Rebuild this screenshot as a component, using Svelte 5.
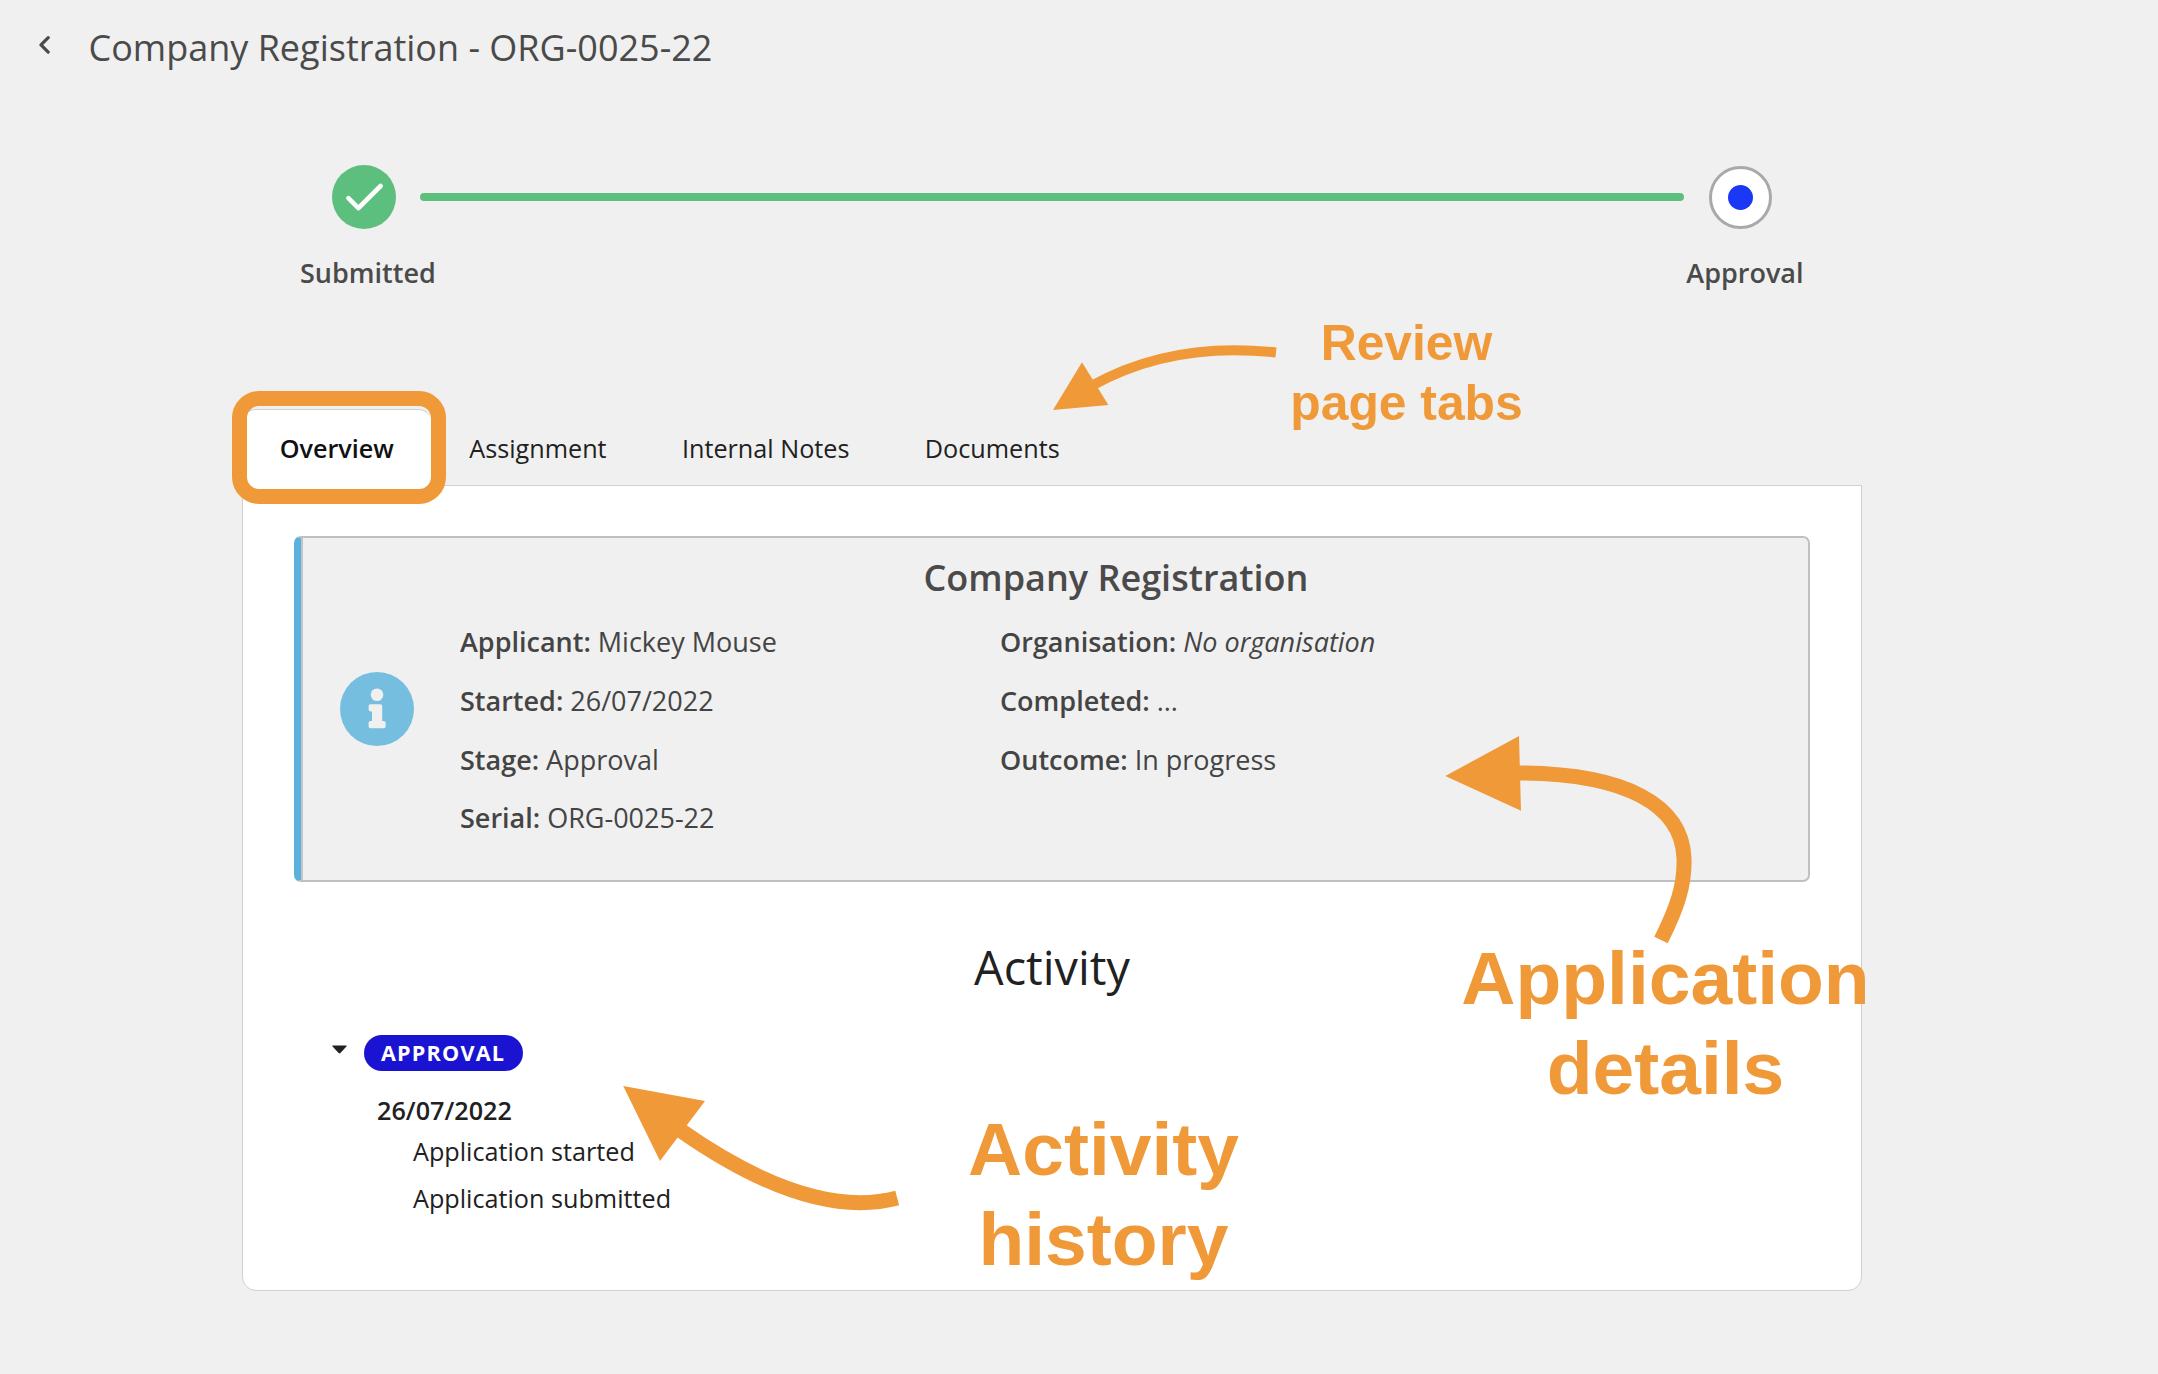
<script>
  const tabs = ['Overview', 'Assignment', 'Internal Notes', 'Documents'];
  let active = $state('Overview');

  const left = [
    { label: 'Applicant:', value: 'Mickey Mouse' },
    { label: 'Started:', value: '26/07/2022' },
    { label: 'Stage:', value: 'Approval' },
    { label: 'Serial:', value: 'ORG-0025-22' }
  ];
  const right = [
    { label: 'Organisation:', value: 'No organisation', muted: true },
    { label: 'Completed:', value: '...' },
    { label: 'Outcome:', value: 'In progress' }
  ];
  const events = ['Application started', 'Application submitted'];
</script>

{#snippet details(rows)}
  <dl class="details">
    {#each rows as row}
      <div class="detail">
        <dt>{row.label}</dt>
        <dd class:muted={row.muted}>{row.value}</dd>
      </div>
    {/each}
  </dl>
{/snippet}

<div class="page">
  <header class="header">
    <svg class="back" viewBox="0 0 12 18" aria-hidden="true">
      <path d="M10.2 1.7 3 8.9l7.2 7.2" />
    </svg>
    <h1>Company Registration - ORG-0025-22</h1>
  </header>

  <section class="stepper">
    <div class="track">
      <svg class="done" viewBox="0 0 64 64" aria-hidden="true">
        <circle cx="32" cy="32" r="32" />
        <path d="M16.4 33.2 26.4 43.2 48.6 21" />
      </svg>
      <div class="line"></div>
      <div class="current"><span></span></div>
    </div>
    <div class="labels">
      <span>Submitted</span>
      <span>Approval</span>
    </div>
  </section>

  <nav class="tabs">
    {#each tabs as tab}
      <button class="tab" class:active={active === tab} onclick={() => (active = tab)}>{tab}</button>
    {/each}
  </nav>

  <main class="panel">
    <section class="card">
      <svg class="info" viewBox="0 0 74 74" aria-hidden="true">
        <circle cx="37" cy="37" r="37" />
        <circle class="cut" cx="37" cy="22.8" r="6.3" />
        <path class="cut" d="M30.4 32.2h10a1.8 1.8 0 0 1 1.8 1.8v15h1.6a1.8 1.8 0 0 1 1.8 1.8v3.6a1.8 1.8 0 0 1-1.8 1.8H30.4a1.8 1.8 0 0 1-1.8-1.8v-3.6a1.8 1.8 0 0 1 1.8-1.8H32V39.4h-1.6a1.8 1.8 0 0 1-1.8-1.8V34a1.8 1.8 0 0 1 1.8-1.8z" />
      </svg>
      <div class="card-body">
        <h2>Company Registration</h2>
        <div class="columns">
          {@render details(left)}
          {@render details(right)}
        </div>
      </div>
    </section>

    <h3>Activity</h3>

    <section class="activity">
      <div class="stage">
        <svg class="caret" viewBox="0 0 15 9" aria-hidden="true">
          <path d="M1 .5h13q1 .2.4 1L8.4 8q-.9.9-1.8 0L.6 1.5Q0 .7 1 .5z" />
        </svg>
        <span class="pill">APPROVAL</span>
      </div>
      <div class="day">
        <h4>26/07/2022</h4>
        <ul>
          {#each events as event}
            <li>{event}</li>
          {/each}
        </ul>
      </div>
    </section>
  </main>

  <!-- Call-outs drawn over the page -->
  <svg class="notes" viewBox="0 0 2158 1374">
    <rect x="239.5" y="398.5" width="199" height="98" rx="19.5" class="stroke thick" />

    <path class="stroke thin" d="M1092 385.6Q1172 341 1276 352.5" />
    <path class="head" d="M1053 410 1082 362.3 1108.4 405z" />
    <text class="small" x="1406.5" y="360">Review</text>
    <text class="small" x="1406.5" y="420">page tabs</text>

    <path class="stroke thick" d="M1516 773C1628 773 1682 806 1684 858C1685 885 1677 908 1661 940" />
    <path class="head" d="M1445.3 776 1519 736 1521 810.7z" />
    <text class="large" x="1665.5" y="1004">Application</text>
    <text class="large" x="1665.5" y="1094">details</text>

    <path class="stroke thick" d="M680 1130Q810 1221 897.2 1198" />
    <path class="head" d="M623.2 1086 705 1101 660 1161z" />
    <text class="large" x="1103.5" y="1175">Activity</text>
    <text class="large" x="1103.5" y="1265">history</text>
  </svg>
</div>

<style>
  :global(body) {
    background: #f0f0f0;
  }

  .page {
    position: relative;
    box-sizing: border-box;
    width: 2158px;
    height: 1374px;
    padding-top: 23px;
    background: #f0f0f0;
    color: #4a4a4a;
    font-family: 'Open Sans', 'Noto Sans', sans-serif;
    overflow: hidden;
  }

  h1, h2, h3, h4, dl, dd, ul {
    margin: 0;
    padding: 0;
    font-weight: 400;
  }

  .header {
    display: flex;
    align-items: flex-start;
    gap: 38.5px;
    height: 50px;
    padding-left: 38px;
  }
  .back {
    width: 12px;
    height: 18px;
    margin-top: 13px;
    fill: none;
    stroke: #4a4a4a;
    stroke-width: 3.2;
    stroke-linecap: round;
    stroke-linejoin: round;
  }
  h1 {
    font-size: 36px;
    line-height: 50px;
    white-space: nowrap;
  }

  .stepper {
    margin-top: 92px;
  }
  .track {
    display: flex;
    align-items: center;
    gap: 24px;
    padding: 0 386px 0 332px;
  }
  .done {
    width: 64px;
    height: 64px;
    fill: #5dbf7e;
  }
  .done path {
    fill: none;
    stroke: #fff;
    stroke-width: 4.6;
    stroke-linecap: round;
    stroke-linejoin: round;
  }
  .line {
    flex: 1;
    height: 8px;
    border-radius: 4px;
    background: #5dbf7e;
  }
  .current {
    box-sizing: border-box;
    display: grid;
    place-items: center;
    width: 63px;
    height: 63px;
    margin: 1px 0 0 1px;
    border: 3px solid #a9a9ad;
    border-radius: 50%;
    background: #fff;
  }
  .current span {
    width: 25px;
    height: 25px;
    border-radius: 50%;
    background: #1a38f5;
  }
  .labels {
    display: flex;
    justify-content: space-between;
    margin-top: 25px;
    padding: 0 354.5px 0 300px;
    font-size: 27px;
    font-weight: 600;
    line-height: 37px;
  }

  .tabs {
    display: flex;
    width: 1620px;
    margin: 118px 0 0 242px;
  }
  .tab {
    height: 77px;
    margin-bottom: -1px;
    padding: 0 37.7px;
    border: 0;
    border-top: 1px solid transparent;
    border-radius: 14px 14px 0 0;
    background: transparent;
    color: #212121;
    font: 400 25.2px/76px 'Open Sans', 'Noto Sans', sans-serif;
    white-space: nowrap;
  }
  .tab.active {
    position: relative;
    z-index: 1;
    border-color: #d0d0d0;
    background: #fff;
    color: #111;
    font-weight: 600;
  }

  .panel {
    box-sizing: border-box;
    width: 1620px;
    height: 806px;
    margin-left: 242px;
    padding: 50px 51px;
    border: 1px solid #d0d0d0;
    border-radius: 0 0 14px 14px;
    background: #fff;
  }

  .card {
    box-sizing: border-box;
    display: flex;
    align-items: center;
    gap: 46px;
    height: 346px;
    padding: 0 36px 0 39px;
    border: 2px solid #c0c0c0;
    border-left: 7px solid #59b1dc;
    border-radius: 7px;
    background: #f0f0f0;
    box-shadow: inset 2px 0 #c4c4c4;
  }
  .info {
    flex: none;
    width: 74px;
    height: 74px;
    fill: #76bee0;
  }
  .info .cut {
    fill: #f0f0f0;
  }
  .card-body {
    flex: 1;
    align-self: stretch;
    padding-top: 15px;
  }
  h2 {
    font-size: 36px;
    font-weight: 600;
    line-height: 50px;
    text-align: center;
  }
  .columns {
    display: grid;
    grid-template-columns: 540px 1fr;
    align-items: start;
    margin-top: 10.2px;
    color: #444;
    font-size: 27px;
    line-height: 58.67px;
  }
  .detail {
    display: flex;
    gap: 7px;
    white-space: nowrap;
  }
  dt {
    font-weight: 600;
  }
  .muted {
    font-style: italic;
  }

  h3 {
    margin-top: 53px;
    color: #212121;
    font-size: 46.8px;
    line-height: 65px;
    text-align: center;
  }

  .activity {
    margin-top: 35px;
    padding-left: 38px;
    color: #212121;
    font-size: 25.2px;
  }
  .stage {
    display: flex;
    gap: 17px;
  }
  .caret {
    width: 15px;
    height: 9px;
    margin-top: 10px;
    fill: #212121;
  }
  .pill {
    box-sizing: border-box;
    width: 159px;
    height: 36px;
    padding-left: 17px;
    border-radius: 18px;
    background: #1b13d2;
    color: #fff;
    font-size: 21.6px;
    font-weight: 700;
    line-height: 35px;
    letter-spacing: 1.2px;
  }
  .day {
    margin-top: 21px;
    padding-left: 45px;
  }
  h4 {
    font-size: 25.2px;
    font-weight: 600;
    line-height: 36px;
  }
  ul {
    padding-left: 36px;
    line-height: 47px;
    list-style: none;
  }

  .notes {
    position: absolute;
    inset: 0;
    z-index: 2;
    width: 2158px;
    height: 1374px;
    pointer-events: none;
    font-family: 'Liberation Sans', Arial, sans-serif;
    font-weight: 700;
    text-anchor: middle;
    fill: #ef9938;
  }
  .stroke {
    fill: none;
    stroke: #ef9938;
  }
  .thin {
    stroke-width: 10;
  }
  .thick {
    stroke-width: 15;
  }
  .small {
    font-size: 49.8px;
  }
  .large {
    font-size: 75px;
  }
</style>
